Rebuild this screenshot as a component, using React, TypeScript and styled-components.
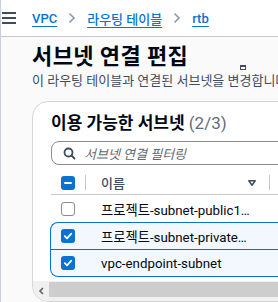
import * as React from "react"
import styled, { createGlobalStyle } from "styled-components"

const GlobalStyle = createGlobalStyle`
  html, body {
    margin: 0;
    padding: 0;
    background: #fafafa;
    overflow: hidden;
  }
  body {
    font-family: Roboto, "Noto Sans CJK KR", sans-serif;
    color: #000716;
  }
`

const Shell = styled.div`
  display: flex;
  width: 278px;
  height: 302px;
  overflow: hidden;
`

const Rail = styled.div`
  width: 1px;
  flex: none;
  background: #c6d0e0;
`

const Main = styled.div`
  flex: 1;
  min-width: 0;
`

const TopBar = styled.header`
  height: 36px;
  display: flex;
  align-items: center;
  background: #ffffff;
  border-bottom: 1px solid #c6c6cd;
`

const MenuButton = styled.div`
  width: 14px;
  margin-left: 1px;
  margin-right: 16px;
  display: flex;
  flex-direction: column;
  gap: 3px;
  span {
    display: block;
    height: 2px;
    background: #414d5c;
  }
`

const Crumbs = styled.nav`
  display: flex;
  align-items: center;
  gap: 11px;
  font-size: 13px;
`

const Crumb = styled.a`
  color: #0972d3;
  text-decoration: underline;
  text-underline-offset: 3px;
  font-weight: 500;
`

const Chevron = styled.svg`
  display: block;
`

const Content = styled.div`
  padding: 6px 0 0 31px;
`

const Heading = styled.h1`
  margin: 0;
  font-size: 22px;
  line-height: 27px;
  font-weight: 700;
  letter-spacing: 0.4px;
`

const SubRow = styled.div`
  position: relative;
  padding-top: 2px;
`

const Subtitle = styled.p`
  margin: 0;
  font-size: 13px;
  line-height: 18px;
  color: #414d5c;
  white-space: nowrap;
`

const Marker = styled.svg`
  position: absolute;
  left: 208px;
  top: -5px;
`

const Card = styled.section`
  margin-top: 11px;
  width: 300px;
  background: #ffffff;
  border: 1px solid #d5d5da;
  border-radius: 16px;
  overflow: hidden;
`

const CardHead = styled.div`
  padding: 10px 0 0 18px;
`

const CardTitle = styled.h2`
  margin: 0;
  font-size: 17px;
  line-height: 22px;
  font-weight: 700;
  span {
    font-weight: 400;
    color: #5f6b7a;
  }
`

const Search = styled.div`
  margin-top: 7px;
  height: 22px;
  display: flex;
  align-items: center;
  gap: 8px;
  padding-left: 11px;
  border: 1px solid #8c8c94;
  border-radius: 8px;
  font-size: 13px;
  font-style: italic;
  color: #656871;
`

const Table = styled.div`
  margin-top: 6px;
  padding-left: 18px;
`

const HeadRow = styled.div`
  height: 23px;
  display: flex;
  align-items: center;
  border-bottom: 1px solid #c6c6cd;
  font-size: 13px;
  font-weight: 500;
  color: #414d5c;
`

const Row = styled.div<{ $selected?: boolean; $first?: boolean; $last?: boolean }>`
  box-sizing: border-box;
  height: ${(p) => (p.$last ? "28px" : "27px")};
  display: flex;
  align-items: center;
  font-size: 13.3px;
  white-space: nowrap;
  background: ${(p) => (p.$selected ? "#f2f8fd" : "#ffffff")};
  border-top: 1px solid ${(p) => (p.$selected ? "#0972d3" : "transparent")};
  border-left: 1px solid ${(p) => (p.$selected ? "#0972d3" : "transparent")};
  border-bottom: ${(p) => (p.$last ? "1px solid #0972d3" : "0")};
  border-top-left-radius: ${(p) => (p.$first ? "8px" : "0")};
  border-bottom-left-radius: ${(p) => (p.$last ? "8px" : "0")};
  margin-left: -1px;
`

const BoxCell = styled.div`
  width: 34px;
  padding-left: 10px;
  box-sizing: border-box;
  display: flex;
  align-items: center;
`

const Box = styled.span<{ $on?: boolean }>`
  width: 14px;
  height: 14px;
  box-sizing: border-box;
  border-radius: 3px;
  border: ${(p) => (p.$on ? "0" : "1.5px solid #8c8c94")};
  background: ${(p) => (p.$on ? "#0972d3" : "#ffffff")};
  display: flex;
  align-items: center;
  justify-content: center;
`

const Divider = styled.span`
  width: 1px;
  height: 15px;
  background: #c6c6cd;
`

const NameHead = styled.div`
  width: 183px;
  padding-left: 15px;
  padding-right: 13px;
  box-sizing: border-box;
  display: flex;
  align-items: center;
  justify-content: space-between;
`

const NameCell = styled.div`
  padding-left: 16px;
`

const ScrollBar = styled.div`
  margin-top: 4px;
  height: 20px;
  display: flex;
  background: #f0f0f0;
`

const ScrollArrow = styled.div`
  width: 16px;
  display: flex;
  align-items: center;
  justify-content: center;
`

const Thumb = styled.div`
  flex: 1;
  margin: 1px 0 4px;
  background: #cdcdcd;
`

const Check = () => (
  <svg width="10" height="10" viewBox="0 0 10 10">
    <path d="M1.8 5.2 L4 7.3 L8.3 2.6" fill="none" stroke="#fff" strokeWidth="1.8" strokeLinecap="round" strokeLinejoin="round" />
  </svg>
)

const Sep = () => (
  <Chevron width="8" height="12" viewBox="0 0 8 12">
    <path d="M1.5 1.5 L6 6 L1.5 10.5" fill="none" stroke="#8d99a8" strokeWidth="1.6" />
  </Chevron>
)

const rows = [
  { name: "프로젝트-subnet-public1…", on: false },
  { name: "프로젝트-subnet-private…", on: true },
  { name: "vpc-endpoint-subnet", on: true },
]

const App = () => {
  return (
    <Shell>
      <GlobalStyle />
      <Rail />
      <Main>
        <TopBar>
          <MenuButton>
            <span />
            <span />
            <span />
          </MenuButton>
          <Crumbs>
            <Crumb>VPC</Crumb>
            <Sep />
            <Crumb>라우팅 테이블</Crumb>
            <Sep />
            <Crumb>rtb</Crumb>
          </Crumbs>
        </TopBar>
        <Content>
          <Heading>서브넷 연결 편집</Heading>
          <SubRow>
            <Marker width="6" height="5" viewBox="0 0 6 5">
              <rect x="0.5" y="0.5" width="5" height="4" fill="#fff" stroke="#414d5c" />
              <rect x="0" y="0" width="6" height="2" fill="#414d5c" />
            </Marker>
            <Subtitle>이 라우팅 테이블과 연결된 서브넷을 변경합니다.</Subtitle>
          </SubRow>
          <Card>
            <CardHead>
              <CardTitle>
                이용 가능한 서브넷 <span>(2/3)</span>
              </CardTitle>
              <Search>
                <svg width="13" height="13" viewBox="0 0 13 13">
                  <circle cx="5.5" cy="5.5" r="4" fill="none" stroke="#414d5c" strokeWidth="1.8" />
                  <path d="M8.5 8.5 L11.5 11.5" stroke="#414d5c" strokeWidth="1.8" strokeLinecap="round" />
                </svg>
                서브넷 연결 필터링
              </Search>
            </CardHead>
            <Table>
              <HeadRow>
                <BoxCell>
                  <Box $on>
                    <svg width="8" height="2" viewBox="0 0 8 2">
                      <rect width="8" height="2" rx="1" fill="#fff" />
                    </svg>
                  </Box>
                </BoxCell>
                <Divider />
                <NameHead>
                  이름
                  <svg width="8" height="6" viewBox="0 0 8 6">
                    <path d="M0.8 0.8 H7.2 L4 5.2 Z" fill="none" stroke="#414d5c" strokeWidth="1.5" strokeLinejoin="round" />
                  </svg>
                </NameHead>
                <Divider />
              </HeadRow>
              {rows.map((r, i) => (
                <Row key={r.name} $selected={r.on} $first={i === 1} $last={i === 2}>
                  <BoxCell>
                    <Box $on={r.on}>{r.on && <Check />}</Box>
                  </BoxCell>
                  <NameCell>{r.name}</NameCell>
                </Row>
              ))}
            </Table>
            <ScrollBar>
              <ScrollArrow>
                <svg width="7" height="8" viewBox="0 0 7 8">
                  <path d="M5 1 L2 4 L5 7" fill="none" stroke="#606060" strokeWidth="1.6" />
                </svg>
              </ScrollArrow>
              <Thumb />
            </ScrollBar>
          </Card>
        </Content>
      </Main>
    </Shell>
  )
}

export default App
